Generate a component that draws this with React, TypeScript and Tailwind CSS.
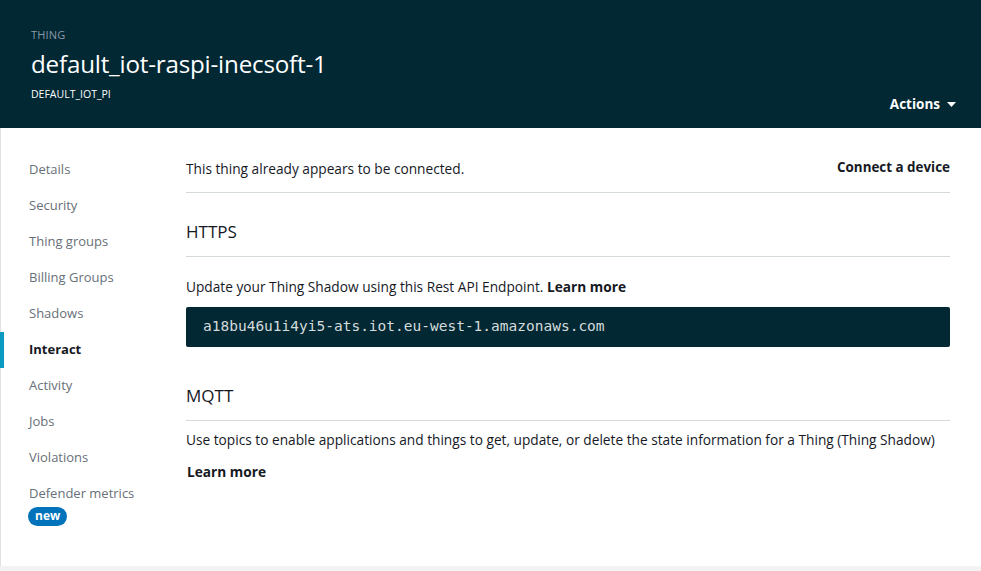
import React from "react";

const nav = [
  "Details",
  "Security",
  "Thing groups",
  "Billing Groups",
  "Shadows",
  "Interact",
  "Activity",
  "Jobs",
  "Violations",
];

export default function App() {
  return (
    <div
      className="w-[981px] h-[571px] bg-[#f2f3f3] flex flex-col overflow-hidden"
      style={{ fontFamily: '"Open Sans", "Noto Sans", sans-serif' }}
    >
      <header className="h-[128px] bg-[#012833] shrink-0 flex flex-col pl-[31px] pr-[26px] pt-[28px] relative">
        <div className="text-[11px] leading-[14px] text-[#8d99a8] tracking-[0.2px]">THING</div>
        <div className="text-[24.2px] leading-[30px] text-white mt-[7px] tracking-[-0.2px]">
          default_iot-raspi-inecsoft-1
        </div>
        <div className="text-[10.5px] leading-[14px] text-white mt-[8px]">DEFAULT_IOT_PI</div>
        <div className="absolute right-[25px] top-[95px] flex items-center gap-[7px] text-white font-bold text-[13.5px] leading-[18px]">
          Actions
          <svg width="9" height="5" viewBox="0 0 9 5">
            <path d="M0 0h9L4.5 5z" fill="#fff" />
          </svg>
        </div>
      </header>
      <div className="h-[438px] bg-white border-l border-[#dfe2e2] flex shrink-0">
        <nav className="w-[185px] shrink-0 pt-[24px] flex flex-col">
          {nav.map((n) =>
            n === "Interact" ? (
              <div
                key={n}
                className="h-[36px] flex items-center -ml-px border-l-[4px] border-[#0a9ac2] pl-[25px] text-[13px] text-[#16191f] font-bold"
              >
                {n}
              </div>
            ) : (
              <div key={n} className="h-[36px] flex items-center pl-[28px] text-[13px] text-[#687078]">
                {n}
              </div>
            )
          )}
          <div className="pl-[28px] pt-[8px] text-[13px] text-[#687078] leading-[18px]">Defender metrics</div>
          <div className="pl-[27px] mt-0">
            <span className="inline-flex items-center h-[19px] px-[7px] rounded-full bg-[#0073bb] text-white font-bold text-[12px]">
              new
            </span>
          </div>
        </nav>
        <main className="flex-1 pr-[31px] pt-[32px] flex flex-col">
          <div className="flex justify-between items-start pb-[14px] border-b border-[#d5dbdb]">
            <span className="text-[13.7px] leading-[18px] text-[#16191f]">This thing already appears to be connected.</span>
            <span className="text-[13.4px] leading-[18px] font-bold text-[#16191f] -mt-[2px]">Connect a device</span>
          </div>
          <div className="mt-[28px] text-[17px] text-[#16191f] leading-[22px] pb-[13px] border-b border-[#d5dbdb]">HTTPS</div>
          <div className="mt-[21px] text-[13.7px] text-[#16191f] leading-[18px]">
            Update your Thing Shadow using this Rest API Endpoint. <span className="font-bold">Learn more</span>
          </div>
          <div
            className="mt-[11px] h-[40px] bg-[#012833] rounded-[2px] flex items-center pl-[17px] text-[14.5px] text-[#d5dbdb]"
            style={{ fontFamily: '"DejaVu Sans Mono", monospace' }}
          >
            a18bu46u1i4yi5-ats.iot.eu-west-1.amazonaws.com
          </div>
          <div className="mt-[38px] text-[17px] text-[#16191f] leading-[22px] pb-[13px] border-b border-[#d5dbdb]">MQTT</div>
          <div className="mt-[10px] text-[13.7px] text-[#16191f] leading-[18px]">
            Use topics to enable applications and things to get, update, or delete the state information for a Thing (Thing Shadow)
          </div>
          <div className="mt-[14px] text-[13.7px] font-bold text-[#16191f] leading-[18px] pl-px">Learn more</div>
        </main>
      </div>
    </div>
  );
}
